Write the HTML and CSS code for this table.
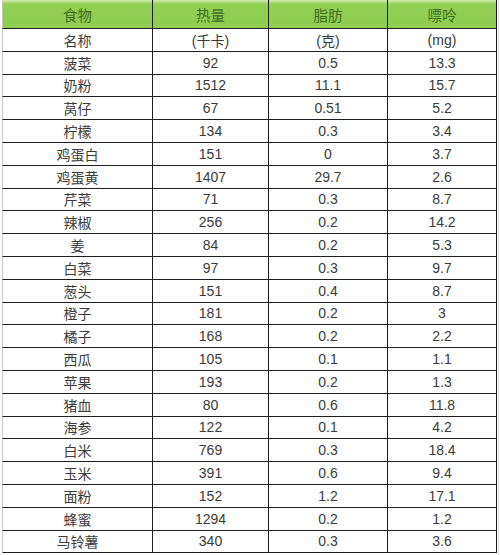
FILE: index.html
```html
<!DOCTYPE html>
<html lang="zh">
<head>
<meta charset="utf-8">
<link rel="stylesheet" href="styles.css">
</head>
<body>
<div class="sheet">
  <div class="grid">
    <div class="c h first">食物</div><div class="c h">热量</div><div class="c h">脂肪</div><div class="c h">嘌呤</div>
    <div class="c first">名称</div><div class="c">(千卡)</div><div class="c">(克)</div><div class="c">(mg)</div>
    <div class="c first">菠菜</div><div class="c">92</div><div class="c">0.5</div><div class="c">13.3</div>
    <div class="c first">奶粉</div><div class="c">1512</div><div class="c">11.1</div><div class="c">15.7</div>
    <div class="c first">莴仔</div><div class="c">67</div><div class="c">0.51</div><div class="c">5.2</div>
    <div class="c first">柠檬</div><div class="c">134</div><div class="c">0.3</div><div class="c">3.4</div>
    <div class="c first">鸡蛋白</div><div class="c">151</div><div class="c">0</div><div class="c">3.7</div>
    <div class="c first">鸡蛋黄</div><div class="c">1407</div><div class="c">29.7</div><div class="c">2.6</div>
    <div class="c first">芹菜</div><div class="c">71</div><div class="c">0.3</div><div class="c">8.7</div>
    <div class="c first">辣椒</div><div class="c">256</div><div class="c">0.2</div><div class="c">14.2</div>
    <div class="c first">姜</div><div class="c">84</div><div class="c">0.2</div><div class="c">5.3</div>
    <div class="c first">白菜</div><div class="c">97</div><div class="c">0.3</div><div class="c">9.7</div>
    <div class="c first">葱头</div><div class="c">151</div><div class="c">0.4</div><div class="c">8.7</div>
    <div class="c first">橙子</div><div class="c">181</div><div class="c">0.2</div><div class="c">3</div>
    <div class="c first">橘子</div><div class="c">168</div><div class="c">0.2</div><div class="c">2.2</div>
    <div class="c first">西瓜</div><div class="c">105</div><div class="c">0.1</div><div class="c">1.1</div>
    <div class="c first">苹果</div><div class="c">193</div><div class="c">0.2</div><div class="c">1.3</div>
    <div class="c first">猪血</div><div class="c">80</div><div class="c">0.6</div><div class="c">11.8</div>
    <div class="c first">海参</div><div class="c">122</div><div class="c">0.1</div><div class="c">4.2</div>
    <div class="c first">白米</div><div class="c">769</div><div class="c">0.3</div><div class="c">18.4</div>
    <div class="c first">玉米</div><div class="c">391</div><div class="c">0.6</div><div class="c">9.4</div>
    <div class="c first">面粉</div><div class="c">152</div><div class="c">1.2</div><div class="c">17.1</div>
    <div class="c first">蜂蜜</div><div class="c">1294</div><div class="c">0.2</div><div class="c">1.2</div>
    <div class="c first">马铃薯</div><div class="c">340</div><div class="c">0.3</div><div class="c">3.6</div>
  </div>
</div>
</body>
</html>
```
FILE: styles.css
```css
html, body {
  margin: 0;
  padding: 0;
  background: #ffffff;
}
.sheet {
  width: 500px;
  height: 555px;
  box-sizing: border-box;
  padding-left: 2px;
  background: #fff;
  position: relative;
  overflow: hidden;
}
.sheet::after {
  content: "";
  position: absolute;
  top: 0;
  bottom: 0;
  left: 498px;
  width: 1px;
  background: #e2e2e2;
}
.grid {
  display: grid;
  grid-template-columns: 151px 116px 119px 109px;
  grid-template-rows: 29px repeat(23, 22.8px);
  font-family: "Liberation Sans", "Noto Sans CJK SC", sans-serif;
  font-size: 14px;
  color: #3b3b3b;
}
.c {
  box-sizing: border-box;
  border-right: 1px solid #1e1e1e;
  border-bottom: 1px solid #1e1e1e;
  display: flex;
  align-items: center;
  justify-content: center;
  white-space: nowrap;
}
.first {
  border-left: 1px solid #c8c8c8;
}
.h {
  background: linear-gradient(to bottom, #d2ecb4 0px, #b3df83 2px, #92cf55 4px, #8fcd50 100%);
  color: #3f6d20;
  font-size: 14.5px;
  padding-top: 1px;
}
```
